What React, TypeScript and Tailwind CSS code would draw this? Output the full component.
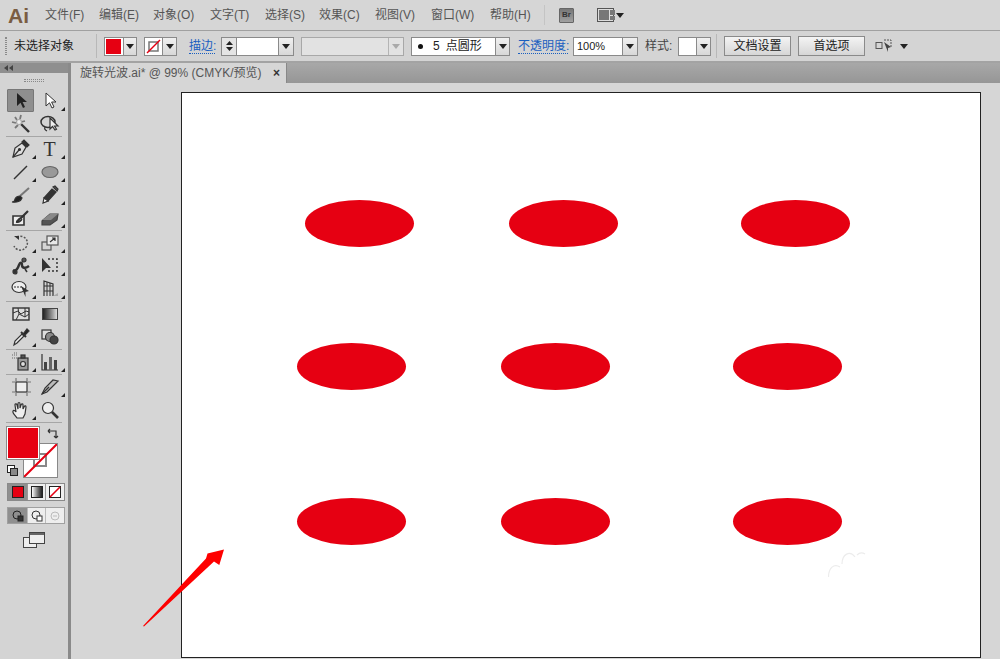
import type { ReactNode } from 'react'

const menus = [
  ['文件(F)', 'w-[54px]'],
  ['编辑(E)', 'w-[54px]'],
  ['对象(O)', 'w-[57px]'],
  ['文字(T)', 'w-[55px]'],
  ['选择(S)', 'w-[54px]'],
  ['效果(C)', 'w-[56px]'],
  ['视图(V)', 'w-[56px]'],
  ['窗口(W)', 'w-[59px]'],
  ['帮助(H)', 'w-[40px]'],
]

const ellipses = [
  'left-[123px] top-[107px]',
  'left-[327px] top-[107px]',
  'left-[559px] top-[107px]',
  'left-[115px] top-[250px]',
  'left-[319px] top-[250px]',
  'left-[551px] top-[250px]',
  'left-[115px] top-[405px]',
  'left-[319px] top-[405px]',
  'left-[551px] top-[405px]',
]

function Caret({ className = '' }: { className?: string }) {
  return (
    <svg width="8" height="5" viewBox="0 0 8 5" className={className}>
      <path d="M0 0h8L4 5z" fill="currentColor" />
    </svg>
  )
}

function DropBtn({ className = '' }: { className?: string }) {
  return (
    <div className={`flex h-full items-center justify-center border-l border-[#8a8a8a] bg-gradient-to-b from-[#f0f0f0] to-[#d8d8d8] text-[#222] ${className}`}>
      <Caret />
    </div>
  )
}

function Tool({ children, corner, active }: { children: ReactNode; corner?: boolean; active?: boolean }) {
  return (
    <div className={`relative flex h-[23px] w-[27px] items-center justify-center ${active ? 'rounded-[1px] border border-[#777] bg-[#8f8f8f]' : ''}`}>
      {children}
      {corner && <span className="absolute bottom-[1px] right-[-2px] h-0 w-0 border-b-[4px] border-l-[4px] border-b-[#222] border-l-transparent" />}
    </div>
  )
}

function Row({ children }: { children: ReactNode }) {
  return <div className="flex gap-[2px] pl-[7px]">{children}</div>
}

function Sep() {
  return (
    <div className="flex h-[2px] items-center px-[6px]">
      <div className="h-px w-full bg-[#a6a6a6]" />
    </div>
  )
}

function Ico({ children }: { children: ReactNode }) {
  return (
    <svg width="20" height="20" viewBox="0 0 20 20" fill="none" stroke="#333" strokeWidth="1.2">
      {children}
    </svg>
  )
}

export default function App() {
  return (
    <div className="relative flex h-[659px] w-[1000px] flex-col overflow-hidden bg-[#d6d6d6] font-['Liberation_Sans','Noto_Sans_CJK_SC',sans-serif] text-[12px] text-[#333]">
      {/* menu */}
      <div className="flex h-[31px] shrink-0 items-center border-b border-[#a0a0a0] bg-[#d6d6d6] pl-[8px]">
        <span className="w-[37px] text-[21px] font-bold leading-none text-[#7a5c42]">Ai</span>
        {menus.map(([m, w]) => (
          <span key={m} className={`${w} whitespace-nowrap text-[#555]`}>
            {m}
          </span>
        ))}
        <div className="ml-[14px] h-[20px] w-px bg-[#c4c4c4]" />
        <div className="ml-[14px] flex h-[15px] w-[15px] items-center justify-center rounded-[1px] border border-[#666] bg-gradient-to-b from-[#777] to-[#a0a0a0] text-[8px] font-bold text-[#333]">
          Br
        </div>
        <div className="ml-[23px] grid h-[14px] w-[17px] grid-cols-[10px_5px] gap-px border border-[#555] bg-[#ddd] p-px">
          <div className="bg-[#777]" />
          <div className="grid gap-px">
            <div className="bg-[#777]" />
            <div className="bg-[#777]" />
          </div>
        </div>
        <Caret className="ml-[2px] text-[#222]" />
      </div>

      {/* control bar */}
      <div className="flex h-[32px] shrink-0 items-center border-b-2 border-[#a3a3a3] bg-[#d4d4d4] text-[#222]">
        <div className="ml-[5px] h-[18px] w-[2px] border-x border-dotted border-[#8a8a8a]" />
        <span className="ml-[7px] w-[58px] whitespace-nowrap">未选择对象</span>
        <div className="ml-[24px] h-[24px] w-px bg-[#b8b8b8]" />
        <div className="ml-[7px] flex h-[19px] w-[33px] border border-[#8a8a8a] bg-white">
          <div className="m-px w-[15px] bg-[#e60012]" />
          <DropBtn className="ml-px flex-1" />
        </div>
        <div className="ml-[7px] flex h-[19px] w-[33px] border border-[#8a8a8a] bg-white">
          <svg width="17" height="17" viewBox="0 0 17 17">
            <rect x="4" y="4" width="9" height="9" fill="none" stroke="#777" strokeWidth="1.5" />
            <path d="M2 15L15 2" stroke="#e60012" strokeWidth="1.4" />
          </svg>
          <DropBtn className="flex-1" />
        </div>
        <span className="ml-[12px] w-[26px] whitespace-nowrap border-b border-dotted border-[#1a5fc0] leading-[14px] text-[#1a5fc0]">描边:</span>
        <div className="ml-[6px] flex h-[19px] w-[73px] border border-[#8a8a8a] bg-white">
          <div className="flex w-[15px] flex-col items-center justify-center gap-[2px] border-r border-[#8a8a8a] bg-[#e4e4e4] text-[#222]">
            <svg width="7" height="4" viewBox="0 0 7 4"><path d="M0 4h7L3.500 0z" fill="currentColor" /></svg>
            <svg width="7" height="4" viewBox="0 0 7 4"><path d="M0 0h7L3.500 4z" fill="currentColor" /></svg>
          </div>
          <div className="flex-1" />
          <DropBtn className="w-[15px]" />
        </div>
        <div className="ml-[7px] flex h-[19px] w-[103px] border border-[#a8a8a8] bg-[#e2e2e2]">
          <div className="flex-1" />
          <div className="flex w-[15px] items-center justify-center border-l border-[#b4b4b4] text-[#aaa]">
            <Caret />
          </div>
        </div>
        <div className="ml-[7px] flex h-[19px] w-[99px] border border-[#8a8a8a] bg-white">
          <div className="flex flex-1 items-center whitespace-nowrap pl-[6px] text-[#222]">
            <span className="h-[5px] w-[5px] rounded-full bg-[#111]" />
            <span className="ml-[10px]">5</span>
            <span className="ml-[6px]">点圆形</span>
          </div>
          <DropBtn className="w-[14px]" />
        </div>
        <span className="ml-[8px] w-[50px] whitespace-nowrap border-b border-dotted border-[#1a5fc0] leading-[14px] text-[#1a5fc0]">不透明度:</span>
        <div className="ml-[5px] flex h-[19px] w-[65px] border border-[#8a8a8a] bg-white">
          <div className="flex flex-1 items-center pl-[3px] text-[11px] text-[#222]">100%</div>
          <DropBtn className="w-[15px]" />
        </div>
        <span className="ml-[7px] w-[28px] whitespace-nowrap text-[#444]">样式:</span>
        <div className="ml-[5px] flex h-[19px] w-[33px] border border-[#8a8a8a] bg-white">
          <div className="flex-1" />
          <DropBtn className="w-[14px]" />
        </div>
        <div className="ml-[5px] h-[24px] w-px bg-[#b8b8b8]" />
        <button className="ml-[7px] h-[20px] w-[67px] border border-[#8a8a8a] bg-gradient-to-b from-[#f4f4f4] to-[#d6d6d6] text-[#222]">文档设置</button>
        <button className="ml-[7px] h-[20px] w-[67px] border border-[#8a8a8a] bg-gradient-to-b from-[#f4f4f4] to-[#d6d6d6] text-[#222]">首选项</button>
        <svg width="18" height="16" viewBox="0 0 18 16" className="ml-[10px]" fill="none" stroke="#555">
          <rect x="1" y="4.500" width="6" height="6" />
          <path d="M9 2h7v7" strokeDasharray="2 1" />
          <path d="M9 4l7 5-3 1 0 4z" fill="#444" stroke="none" />
        </svg>
        <Caret className="ml-[7px] text-[#222]" />
      </div>

      {/* body */}
      <div className="flex min-h-0 flex-1">
        {/* tools */}
        <div className="w-[68px] shrink-0 bg-[#d4d4d4]">
          <div className="flex h-[10px] items-center bg-[#8f8f8f] pl-[4px] text-[#444]">
            <svg width="9" height="6" viewBox="0 0 9 6"><path d="M4 0v6L0 3zM9 0v6L5 3z" fill="currentColor" /></svg>
          </div>
          <div className="mx-auto mt-[6px] mb-[7px] h-[3px] w-[20px] border-y border-dotted border-[#888]" />
          <Row>
            <Tool active><svg width="14" height="18" viewBox="0 0 14 18"><path d="M3 1v13l3.500-3.200L9 16l2-1-2.400-5H13z" fill="#222" /></svg></Tool>
            <Tool corner><svg width="14" height="18" viewBox="0 0 14 18"><path d="M3 1v13l3.500-3.200L9 16l2-1-2.400-5H13z" fill="#fff" stroke="#333" /></svg></Tool>
          </Row>
          <Row>
            <Tool><Ico><path d="M10 10l8 8" strokeWidth="2.4" /><path d="M4 3l2 3M10 1L9 5M1 8l4 1M4 14l3-3M14 7l-4 1" stroke="#777" strokeWidth="1.8" /><circle cx="8" cy="8" r="2.500" fill="#eee" stroke="#aaa" /></Ico></Tool>
            <Tool><Ico><ellipse cx="8" cy="8" rx="7" ry="5.500" strokeWidth="1.5" /><path d="M5 13c-1 2 0 3 2 4" /><path d="M10 4v11l2.500-2.500L15 16l1.500-.8-2-3.200H18z" fill="#eee" /></Ico></Tool>
          </Row>
          <Sep />
          <Row>
            <Tool corner><Ico><path d="M2 18L4 9l7-5 4 4-4 7z" fill="#ddd" /><path d="M2 18l6-7" /><circle cx="8.500" cy="10.500" r="1" fill="#333" /><path d="M11 3l2-2 5 5-2 2z" fill="#333" /></Ico></Tool>
            <Tool corner><span className="font-['Liberation_Serif',serif] text-[20px] leading-none text-[#333]">T</span></Tool>
          </Row>
          <Row>
            <Tool corner><Ico><path d="M3 17L16 4" strokeWidth="1.400" /></Ico></Tool>
            <Tool corner><Ico><ellipse cx="10" cy="10" rx="8" ry="5.500" fill="#999" stroke="#666" /></Ico></Tool>
          </Row>
          <Row>
            <Tool><Ico><path d="M9 11L18 3" stroke="#777" strokeWidth="2" /><path d="M1 17c2 0 3-1 3-3 1-2 3-3 5-3l2 2c-1 3-5 5-10 4z" fill="#222" /></Ico></Tool>
            <Tool corner><Ico><path d="M4 13l8-9 4 3-8 9z" fill="#333" /><path d="M4 13l-1 5 5-2z" fill="#fff" /><path d="M13 2l2-1 3 3-1 2z" fill="#555" /></Ico></Tool>
          </Row>
          <Row>
            <Tool><Ico><path d="M2 8h11v9H2z" fill="#eee" strokeWidth="1.600" /><path d="M5 14c2 0 2-3 5-4l7-7" strokeWidth="2.200" /><path d="M5 14c2 1 5 0 6-3" fill="#333" /></Ico></Tool>
            <Tool corner><Ico><path d="M2 13l8-7h8l-1 6-7 5H2z" fill="#555" stroke="#444" /><path d="M10 6h8l-7 6H2z" fill="#888" stroke="none" /></Ico></Tool>
          </Row>
          <Sep />
          <Row>
            <Tool corner><Ico><path d="M6 4a7 7 0 1 1-3 9" strokeDasharray="2 1.500" stroke="#555" strokeWidth="1.500" /><path d="M3 3h5v4z" fill="#333" stroke="none" /></Ico></Tool>
            <Tool corner><Ico><rect x="2" y="9" width="9" height="8" stroke="#555" /><rect x="7" y="3" width="11" height="9" fill="#e8e8e8" stroke="#555" /><path d="M10 9l5-4M12 5h3v3" /></Ico></Tool>
          </Row>
          <Row>
            <Tool corner><Ico><path d="M2 14c3 2 5-2 6-5s3-3 3 0 3 4 7 1" strokeWidth="2.400" /><circle cx="4" cy="16" r="2" fill="#333" /><circle cx="13" cy="4" r="2" fill="#555" /><path d="M14 13l2 3" strokeWidth="1.500" /></Ico></Tool>
            <Tool corner><Ico><path d="M2 2v14l4-4h5z" fill="#333" stroke="none" /><path d="M8 3h9v12H8" strokeDasharray="2 2" strokeWidth="1.500" /></Ico></Tool>
          </Row>
          <Row>
            <Tool corner><Ico><ellipse cx="8" cy="8" rx="7" ry="5.500" fill="#eee" /><path d="M3 8h9" strokeDasharray="2 1" /><path d="M10 7l8 5-3.500 1v5z" fill="#333" stroke="none" /></Ico></Tool>
            <Tool corner><Ico><path d="M4 17V2l9 3v12" /><path d="M4 7h9M4 12h9M7 3v14M10 4v13" strokeWidth="1" /><path d="M13 17l5-3v3z" fill="#aaa" stroke="none" /></Ico></Tool>
          </Row>
          <Sep />
          <Row>
            <Tool><Ico><rect x="2" y="4" width="16" height="12" fill="#ddd" strokeWidth="1.400" /><path d="M2 9l5-2 3 3 5-3 3 1M5 16l3-6 6 3 4-3M7 4l1 6M14 4l0 9" strokeWidth="1" /></Ico></Tool>
            <Tool><div className="h-[12px] w-[16px] border border-[#444] bg-gradient-to-r from-[#222] to-[#ddd]" /></Tool>
          </Row>
          <Row>
            <Tool corner><Ico><path d="M3 18l1-4 7-7 2 2-7 7z" fill="#eee" /><path d="M10 5l5 5" strokeWidth="2" /><path d="M12 7l4-5 2 2-4 4z" fill="#222" /></Ico></Tool>
            <Tool><Ico><rect x="2" y="3" width="9" height="9" fill="#ddd" /><circle cx="10" cy="10" r="4.500" fill="#888" /><circle cx="14" cy="13" r="4" fill="#444" /></Ico></Tool>
          </Row>
          <Sep />
          <Row>
            <Tool corner><Ico><path d="M1 3h5M1 6h5M3 1h4" strokeDasharray="1 1" stroke="#666" /><rect x="7" y="6" width="10" height="12" fill="#999" /><rect x="10" y="3" width="4" height="3" fill="#555" /><circle cx="12" cy="12" r="2.500" fill="#ddd" /></Ico></Tool>
            <Tool corner><Ico><path d="M2 2v16h16" /><rect x="4" y="10" width="3" height="8" fill="#444" stroke="none" /><rect x="9" y="5" width="3" height="13" fill="#666" stroke="none" /><rect x="14" y="8" width="3" height="10" fill="#444" stroke="none" /></Ico></Tool>
          </Row>
          <Sep />
          <Row>
            <Tool><Ico><rect x="5" y="5" width="11" height="10" fill="#eee" /><path d="M1 5h3M17 5h3M1 15h3M17 15h3M5 1v3M5 16v3M16 1v3M16 16v3" stroke="#777" /></Ico></Tool>
            <Tool corner><Ico><path d="M2 17l5-2 11-11-5-1L5 11z" fill="#bbb" /><path d="M2 17l7-7" /></Ico></Tool>
          </Row>
          <Row>
            <Tool corner><Ico><path d="M6 18c-2-3-5-5-4-7s3 1 3 1l-1-7c0-2 2-1 2 0l1 4V4c0-2 2-2 2 0v4l1-3c1-2 2-1 2 0v4l1-2c1-2 2-1 2 0l-1 7-2 4z" fill="#eee" /></Ico></Tool>
            <Tool><Ico><circle cx="8" cy="8" r="5.500" fill="#eee" /><path d="M12 12l6 6" strokeWidth="2.600" /></Ico></Tool>
          </Row>
          <Sep />
          {/* fill / stroke */}
          <div className="relative h-[109px]">
            <div className="absolute left-[23px] top-[20px] h-[35px] w-[35px] border border-[#888] bg-white">
              <div className="absolute left-[9px] top-[9px] h-[14px] w-[14px] border-2 border-[#888]" />
              <svg width="33" height="33" viewBox="0 0 33 33" className="absolute inset-0">
                <path d="M0 33L33 0" stroke="#e60012" strokeWidth="2" />
              </svg>
            </div>
            <div className="absolute left-[6px] top-[3px] h-[34px] w-[34px] border border-[#8a8a8a] bg-white p-px">
              <div className="h-full w-full bg-[#e60012]" />
            </div>
            <svg width="12" height="12" viewBox="0 0 12 12" className="absolute left-[47px] top-[5px]" fill="none" stroke="#333" strokeWidth="1.200">
              <path d="M1 3h8v7M1 3l2-2M1 3l2 2M9 10l-2-2M9 10l2-2" />
            </svg>
            <div className="absolute left-[7px] top-[42px] h-[8px] w-[8px] border border-[#222] bg-white" />
            <div className="absolute left-[10px] top-[45px] h-[8px] w-[8px] border border-[#222] bg-[#888]" />
            <div className="absolute left-[7px] top-[60px] flex h-[18px] w-[58px] border border-[#8a8a8a] bg-[#eee]">
              <div className="flex w-[19px] items-center justify-center bg-[#8f8f8f]">
                <div className="h-[12px] w-[12px] border border-[#222] bg-[#e60012]" />
              </div>
              <div className="flex w-[19px] items-center justify-center border-x border-[#999]">
                <div className="h-[12px] w-[12px] border border-[#222] bg-gradient-to-r from-[#fff] to-[#222]" />
              </div>
              <div className="flex w-[18px] items-center justify-center">
                <svg width="12" height="12" viewBox="0 0 12 12">
                  <rect x=".5" y=".5" width="11" height="11" fill="#fff" stroke="#222" />
                  <path d="M1 11L11 1" stroke="#e60012" strokeWidth="1.600" />
                </svg>
              </div>
            </div>
            <div className="absolute left-[7px] top-[84px] flex h-[17px] w-[58px] border border-[#a0a0a0] bg-[#eee]">
              <div className="flex w-[19px] items-center justify-center bg-[#8f8f8f]">
                <svg width="12" height="12" viewBox="0 0 12 12" fill="none" stroke="#222"><circle cx="5" cy="5" r="4" /><rect x="6" y="6" width="5" height="5" fill="#333" /></svg>
              </div>
              <div className="flex w-[19px] items-center justify-center border-x border-[#bbb]">
                <svg width="12" height="12" viewBox="0 0 12 12" fill="none" stroke="#333"><circle cx="5" cy="5" r="4" /><rect x="6" y="6" width="5" height="5" fill="#fff" /></svg>
              </div>
              <div className="flex w-[18px] items-center justify-center">
                <svg width="12" height="12" viewBox="0 0 12 12" fill="none" stroke="#bbb"><circle cx="6" cy="6" r="4" /><path d="M4 6h4" /></svg>
              </div>
            </div>
          </div>
          <div className="flex justify-center">
            <svg width="22" height="16" viewBox="0 0 22 16">
              <rect x=".5" y="5.500" width="13" height="10" fill="#eee" stroke="#444" />
              <rect x="6.500" y=".5" width="15" height="11" fill="#eee" stroke="#444" />
              <rect x="7" y="1" width="14" height="2" fill="#666" />
            </svg>
          </div>
        </div>

        <div className="w-[3px] shrink-0 bg-[#8a8a8a]" />

        {/* document */}
        <div className="flex min-w-0 flex-1 flex-col">
          <div className="flex h-[20px] shrink-0 bg-gradient-to-b from-[#a8a8a8] to-[#969696]">
            <div className="flex w-[216px] items-center justify-between border-r border-[#888] bg-[#d6d6d6] pl-[9px] pr-[6px] text-[#555]">
              <span className="whitespace-nowrap">旋转光波.ai* @ 99% (CMYK/预览)</span>
              <span className="text-[12px] font-bold leading-none text-[#333]">×</span>
            </div>
          </div>
          <div className="min-h-0 flex-1 pl-[110px] pt-[9px] pr-[19px]">
            <div className="relative h-[566px] w-[800px] border border-[#222] bg-white">
              {ellipses.map((pos) => (
                <div key={pos} className={`absolute h-[47px] w-[109px] rounded-[50%] bg-[#e60012] ${pos}`} />
              ))}
              <svg width="40" height="30" viewBox="0 0 40 30" className="absolute left-[646px] top-[457px]" fill="none" stroke="#ececec" strokeWidth="1.200">
                <path d="M.5 27C.5 18 6 13 12 17M14 14C14 4 22 0 27 7M29 5c2-2 5-3 8-1" />
              </svg>
            </div>
          </div>
        </div>
      </div>

      {/* annotation arrow */}
      <svg width="90" height="85" viewBox="140 545 90 85" className="pointer-events-none absolute left-[140px] top-[545px]">
        <path d="M143 626L206 558.500L207.500 553.500L224 549.500L219.300 565L214 561.500L144 626.500z" fill="#fe0000" />
      </svg>
    </div>
  )
}
